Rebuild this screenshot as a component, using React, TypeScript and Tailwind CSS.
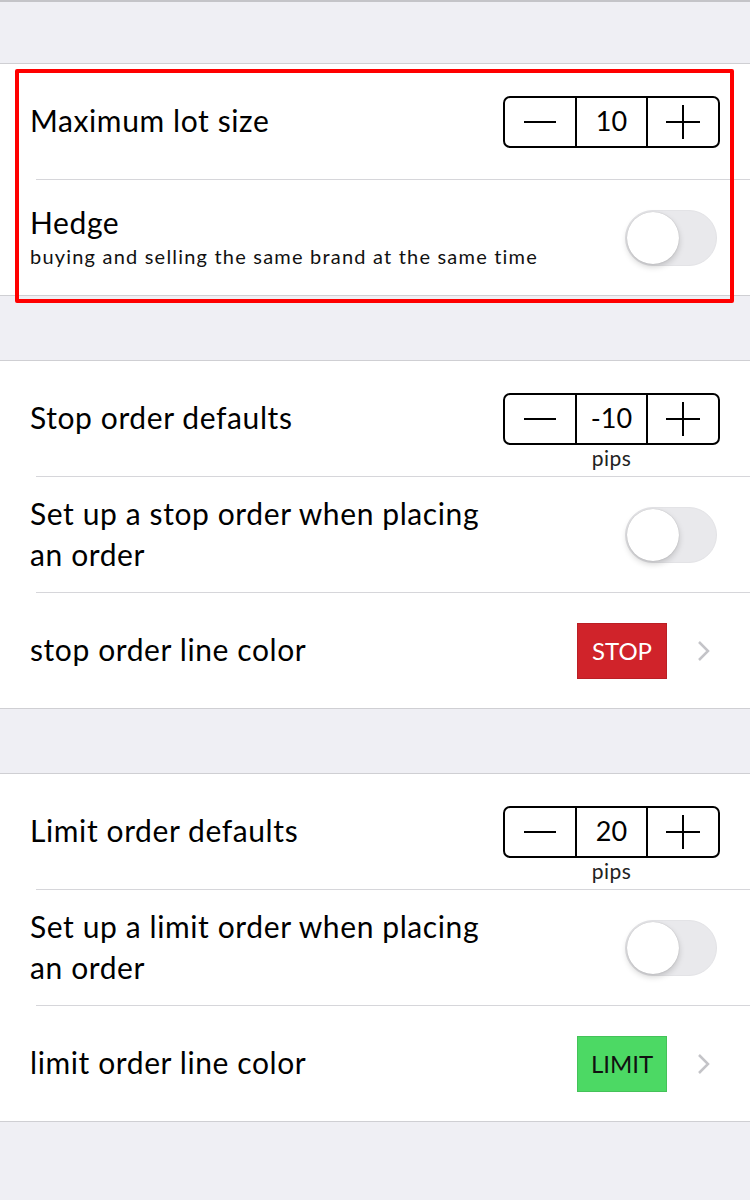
import type { ReactNode } from "react"

const FONT = "font-['Lato','Open_Sans',sans-serif]"

function Stepper({ value, unit }: { value: string; unit?: string }) {
  const box = (
    <div className="flex h-[52px] w-[217px] rounded-[7px] border-2 border-black bg-white">
      <div className="flex flex-1 items-center justify-center">
        <svg width="32" height="4" viewBox="0 0 32 4">
          <line x1="0" y1="2" x2="32" y2="2" stroke="black" strokeWidth="2" />
        </svg>
      </div>
      <div className="flex flex-1 items-center justify-center border-x-2 border-black text-[27px] text-black">
        {value}
      </div>
      <div className="flex flex-1 items-center justify-center">
        <svg width="34" height="34" viewBox="0 0 34 34">
          <line x1="0" y1="17" x2="34" y2="17" stroke="black" strokeWidth="2" />
          <line x1="17" y1="0" x2="17" y2="34" stroke="black" strokeWidth="2" />
        </svg>
      </div>
    </div>
  )
  if (!unit) return box
  return (
    <div className="flex flex-col items-center pt-[26px]">
      {box}
      <div className="h-[26px] text-[21px] leading-[26px] tracking-[0.5px] text-[#222]">{unit}</div>
    </div>
  )
}

function Toggle() {
  return (
    <div className="mr-[3px] flex h-[56px] w-[92px] items-center rounded-full border border-[#e3e3e6] bg-[#e9e9ec] px-[1px]">
      <div className="h-[52px] w-[52px] rounded-full bg-white shadow-[0_3px_6px_rgba(0,0,0,0.18),0_0_1px_rgba(0,0,0,0.25)]" />
    </div>
  )
}

function ColorChip({ label, className }: { label: string; className: string }) {
  return (
    <div className="flex items-center gap-[30px] pr-[10px]">
      <div className={`flex h-[56px] w-[90px] items-center justify-center border border-black/10 text-[24px] ${className}`}>
        {label}
      </div>
      <svg width="13" height="22" viewBox="0 0 13 22">
        <polyline points="2,2 11,11 2,20" fill="none" stroke="#c4c4c8" strokeWidth="2.5" />
      </svg>
    </div>
  )
}

function Row({ children, right }: { children: ReactNode; right: ReactNode }) {
  return (
    <div className="flex h-[115px] items-center justify-between pl-[30px] pr-[30px]">
      <div className="-mt-[2px] text-[30px] leading-[41px] tracking-[0.6px] text-black">{children}</div>
      {right}
    </div>
  )
}

const Sep = () => <div className="ml-[36px] h-px bg-[#d6d6da]" />

function Section({ children }: { children: ReactNode }) {
  return <div className="border-y border-[#cfcfd3] bg-white">{children}</div>
}

export default function App() {
  return (
    <div className={`relative min-h-[1200px] border-t-2 border-[#c4c4c8] bg-[#efeff4] ${FONT}`}>
      <div className="h-[61px]" />

      <Section>
        <Row right={<Stepper value="10" />}>Maximum lot size</Row>
        <Sep />
        <Row right={<Toggle />}>
          <div className="leading-[36px]">Hedge</div>
          <div className="mt-[2px] text-[20px] leading-[28px] tracking-[1.2px] text-[#111]">
            buying and selling the same brand at the same time
          </div>
        </Row>
      </Section>

      <div className="h-[64px]" />

      <Section>
        <Row right={<Stepper value="-10" unit="pips" />}>Stop order defaults</Row>
        <Sep />
        <Row right={<Toggle />}>
          <div className="w-[480px]">Set up a stop order when placing an order</div>
        </Row>
        <Sep />
        <Row right={<ColorChip label="STOP" className="bg-[#d0232a] text-white" />}>
          stop order line color
        </Row>
      </Section>

      <div className="h-[64px]" />

      <Section>
        <Row right={<Stepper value="20" unit="pips" />}>Limit order defaults</Row>
        <Sep />
        <Row right={<Toggle />}>
          <div className="w-[480px]">Set up a limit order when placing an order</div>
        </Row>
        <Sep />
        <Row right={<ColorChip label="LIMIT" className="bg-[#4cd964] text-[#111]" />}>
          limit order line color
        </Row>
      </Section>

      {/* annotation box over the first group */}
      <div className="pointer-events-none absolute left-[15px] top-[67px] h-[234px] w-[719px] rounded-[2px] border-4 border-[#ff0000]" />
    </div>
  )
}
